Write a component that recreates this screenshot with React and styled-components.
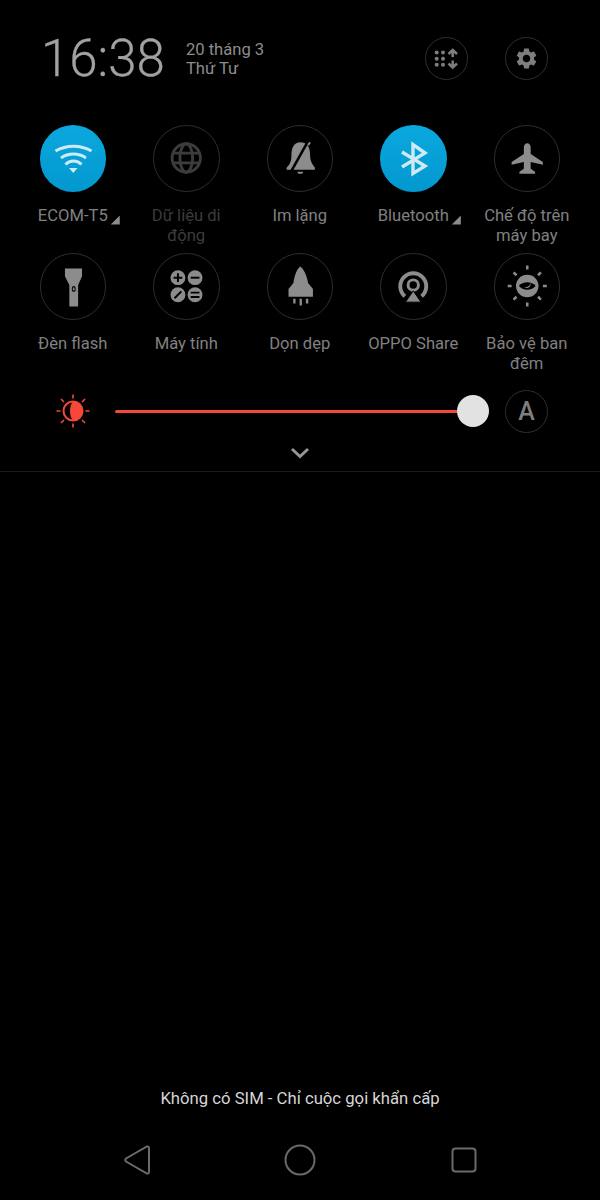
import styled, { createGlobalStyle } from "styled-components";
import { MdSettings } from "react-icons/md";

const GlobalStyle = createGlobalStyle`
  html, body {
    margin: 0;
    padding: 0;
    background: #000;
  }
  * {
    box-sizing: border-box;
  }
`;

const Screen = styled.div`
  width: 600px;
  height: 1200px;
  background: #000;
  display: flex;
  flex-direction: column;
  font-family: Roboto, "Noto Sans", sans-serif;
  overflow: hidden;
`;

const Header = styled.div`
  height: 125px;
  padding: 37px 52px 0 41px;
  display: flex;
  align-items: flex-start;
`;

const Clock = styled.div`
  font-size: 51px;
  font-weight: 300;
  line-height: 44px;
  color: #a2a2a2;
  -webkit-text-stroke: 0.3px #a2a2a2;
`;

const DateBox = styled.div`
  margin-left: 21px;
  margin-top: 3px;
  font-size: 16.6px;
  line-height: 19px;
  color: #8c8c8c;
  flex: 1;
`;

const RingButton = styled.div`
  width: 43px;
  height: 43px;
  margin-left: ${(props) => props.$gap || 0}px;
  border: 1px solid #303030;
  border-radius: 50%;
  display: flex;
  justify-content: center;
  align-items: center;
  color: #7e7e7e;
  font-size: 25px;
  font-weight: 500;
  flex-shrink: 0;
`;

const TileGrid = styled.div`
  padding-left: 16px;
  display: grid;
  grid-template-columns: repeat(5, 113.5px);
  grid-auto-rows: 128px;
`;

const Tile = styled.div`
  display: flex;
  flex-direction: column;
  align-items: center;
`;

const Circle = styled.div`
  width: 66.5px;
  height: 66.5px;
  border-radius: 50%;
  display: flex;
  justify-content: center;
  align-items: center;
  color: ${(props) => (props.$muted ? "#3c3c3c" : "#8c8c8c")};
  border: ${(props) => (props.$on ? "none" : "1px solid #2e2e2e")};
  background: ${(props) =>
    props.$on ? "linear-gradient(#0aa8de, #0298cf)" : "transparent"};
`;

const TileLabel = styled.div`
  width: 106px;
  margin-top: 14px;
  font-size: 16.6px;
  line-height: 20px;
  text-align: center;
  color: ${(props) => (props.$muted ? "#3c3c3c" : "#808080")};
`;

const Corner = styled.span`
  position: relative;
  &::after {
    content: "";
    position: absolute;
    left: calc(100% + 3px);
    bottom: 0;
    width: 9px;
    height: 9px;
    background: #8c8c8c;
    clip-path: polygon(100% 0, 100% 100%, 0 100%);
  }
`;

const BrightnessRow = styled.div`
  height: 44px;
  margin-top: 8px;
  padding-left: 56px;
  display: flex;
  align-items: center;
`;

const SunWrap = styled.div`
  width: 34px;
  height: 34px;
  margin-right: 25px;
`;

const Track = styled.div`
  position: relative;
  width: 374px;
  height: 32px;
  display: flex;
  align-items: center;
`;

const TrackFill = styled.div`
  width: 358px;
  height: 3px;
  background: #f5473a;
  border-radius: 2px;
`;

const Thumb = styled.div`
  position: absolute;
  right: 0;
  top: 0;
  width: 32px;
  height: 32px;
  border-radius: 50%;
  background: #e2e2e2;
`;

const ChevronRow = styled.div`
  height: 39px;
  padding-top: 14px;
  display: flex;
  justify-content: center;
  border-bottom: 1px solid #191919;
`;

const Spacer = styled.div`
  flex: 1;
`;

const SimNotice = styled.div`
  font-size: 16.7px;
  line-height: 20px;
  text-align: center;
  color: #d6d6d6;
`;

const NavBar = styled.div`
  height: 91px;
  padding: 11px 0 0 123px;
  display: flex;
  align-items: center;
`;

const NavSlot = styled.div`
  width: ${(props) => props.$w}px;
  display: flex;
`;

const WifiIcon = () => (
  <svg width="66" height="66" viewBox="0 0 66 66" fill="none" stroke="#cdeaf6" strokeWidth="3">
    <path d="M15.500 26 A36 36 0 0 1 51.500 26" />
    <path d="M21 33 A22 22 0 0 1 46 33" />
    <path d="M25.500 39.500 A11 11 0 0 1 41.500 39.500" />
    <path d="M29 43 L37.500 43 L33.300 48 Z" fill="#cdeaf6" stroke="none" />
  </svg>
);

const GlobeIcon = () => (
  <svg width="66" height="66" viewBox="0 0 66 66" fill="none" stroke="currentColor" strokeWidth="3">
    <circle cx="33" cy="33" r="14.5" />
    <ellipse cx="33" cy="33" rx="6.5" ry="14.5" />
    <path d="M19 28 H47 M19 38 H47" />
  </svg>
);

const BellOffIcon = () => (
  <svg width="66" height="66" viewBox="0 0 66 66">
    <path
      d="M33 17 C40 17 43 22 43 29 C43 36 45 39 48 43 V45 H19 V43 C23 39 24 36 24 30 C24 22 27 17 33 17 Z"
      fill="currentColor"
    />
    <path d="M42 14 L23 48" stroke="#000" strokeWidth="2.600" />
    <path d="M43 17 L41 20" stroke="currentColor" strokeWidth="2" />
    <path d="M30 47 H36 L35 49 H31 Z" fill="currentColor" />
  </svg>
);

const BluetoothIcon = () => (
  <svg width="66" height="66" viewBox="0 0 66 66" fill="none" stroke="#cdeaf6" strokeWidth="3.400">
    <path d="M22 27 L45 41 L33 48.500 V19.500 L45 28 L22 42" />
  </svg>
);

const PlaneIcon = () => (
  <svg width="66" height="66" viewBox="0 0 66 66">
    <path
      d="M33 18 C35 18 36.500 20 36.500 22 V29 L49 37 V40 L36.500 37 V44 L41 47 V49 H25 V47 L29.500 44 V37 L17 40 V37 L29.500 29 V22 C29.500 20 31 18 33 18 Z"
      fill="currentColor"
    />
  </svg>
);

const FlashIcon = () => (
  <svg width="66" height="66" viewBox="0 0 66 66">
    <path d="M24.500 15 H42 V23 L38 32 V54 H29 V32 L24.500 23 Z" fill="currentColor" />
    <ellipse cx="33.500" cy="36" rx="2" ry="3" fill="#000" />
    <ellipse cx="33.500" cy="36" rx="1" ry="1.800" fill="currentColor" />
  </svg>
);

const CalcIcon = () => (
  <svg width="66" height="66" viewBox="0 0 66 66">
    <circle cx="24.5" cy="24.5" r="7.6" fill="currentColor" />
    <circle cx="42" cy="24.5" r="7.6" fill="currentColor" />
    <circle cx="24.5" cy="42" r="7.6" fill="currentColor" />
    <circle cx="42" cy="42" r="7.6" fill="currentColor" />
    <g stroke="#000" strokeWidth="2" fill="none">
      <path d="M20 24.5 H29 M24.5 20 V29" />
      <path d="M37.5 24.5 H46.5" />
      <path d="M21 45.5 L28 38.5" />
      <path d="M37.5 39.8 H46.5 M37.5 44.2 H46.5" />
    </g>
  </svg>
);

const RocketIcon = () => (
  <svg width="66" height="66" viewBox="0 0 66 66">
    <path
      d="M33 13 C36 15 40 22 41 30 L46 36 V44 H21 V36 L26 30 C27 22 30 15 33 13 Z"
      fill="currentColor"
    />
    <path d="M27 46 V51 M33.500 46 V53 M40 46 V51" stroke="currentColor" strokeWidth="2.400" />
  </svg>
);

const ShareIcon = () => (
  <svg width="66" height="66" viewBox="0 0 66 66" fill="none" stroke="currentColor">
    <path d="M24.500 43.500 A13.300 13.300 0 1 1 41.500 43.500" strokeWidth="4" />
    <circle cx="33" cy="32" r="5.300" strokeWidth="3" />
    <path d="M25 49.500 L33 38 L41 49.500 Z" fill="currentColor" stroke="#000" strokeWidth="1" />
  </svg>
);

const EyeSunIcon = () => (
  <svg width="66" height="66" viewBox="0 0 66 66">
    <circle cx="33" cy="33" r="11.500" fill="currentColor" />
    <path
      d="M33 12 V16 M33 50 V54 M13 33 H17 M49 33 H53 M19 19 L22 22 M44 44 L47 47 M19 47 L22 44 M44 22 L47 19"
      stroke="currentColor"
      strokeWidth="2.600"
    />
    <path d="M24.500 33 C28 28 38 28 41.500 33 C38 38 28 38 24.500 33 Z" fill="#000" />
    <path d="M29.500 34 C33 35 36 33 36 30 C37.500 33 34 37 29.500 34 Z" fill="currentColor" />
  </svg>
);

const ArrangeIcon = () => (
  <svg width="32" height="24" viewBox="0 0 32 24">
    {[5.500, 11.800, 17.800].map((y) =>
      [5.700, 12].map((x) => <circle key={`${x}-${y}`} cx={x} cy={y} r="2" fill="#7e7e7e" />)
    )}
    <path
      d="M17.500 7 L21.700 3 L26 7 M21.700 3.500 V10 M17.500 16.500 L21.700 20.500 L26 16.500 M21.700 13.500 V20"
      fill="none"
      stroke="#7e7e7e"
      strokeWidth="2.500"
    />
  </svg>
);

const SunIcon = () => (
  <svg width="34" height="34" viewBox="0 0 34 34">
    <circle cx="17" cy="17" r="9.500" fill="none" stroke="#f5473a" strokeWidth="2" />
    <path d="M17 7.500 A9.500 9.500 0 0 1 17 26.500 C13 23 13 11 17 7.500 Z" fill="#f5473a" />
    <path
      d="M17 0.500 V4.500 M17 29.500 V33.500 M0.500 17 H4.500 M29.500 17 H33.500 M5 5 L8 8 M26 26 L29 29 M5 29 L8 26 M26 8 L29 5"
      stroke="#f5473a"
      strokeWidth="1.600"
    />
  </svg>
);

const ChevronIcon = () => (
  <svg width="20" height="12" viewBox="0 0 20 12" fill="none" stroke="#959595" strokeWidth="3">
    <path d="M2 2 L10 9.500 L18 2" />
  </svg>
);

const navStroke = { fill: "none", stroke: "#6a6a6a", strokeWidth: 2 };

const tiles = [
  { label: "ECOM-T5", icon: <WifiIcon />, on: true, corner: true },
  { label: "Dữ liệu di động", icon: <GlobeIcon />, muted: true },
  { label: "Im lặng", icon: <BellOffIcon /> },
  { label: "Bluetooth", icon: <BluetoothIcon />, on: true, corner: true },
  { label: "Chế độ trên máy bay", icon: <PlaneIcon /> },
  { label: "Đèn flash", icon: <FlashIcon /> },
  { label: "Máy tính", icon: <CalcIcon /> },
  { label: "Dọn dẹp", icon: <RocketIcon /> },
  { label: "OPPO Share", icon: <ShareIcon /> },
  { label: "Bảo vệ ban đêm", icon: <EyeSunIcon /> },
];

const App = () => {
  return (
    <Screen>
      <GlobalStyle />
      <Header>
        <Clock>16:38</Clock>
        <DateBox>
          20 tháng 3
          <br />
          Thứ Tư
        </DateBox>
        <RingButton>
          <ArrangeIcon />
        </RingButton>
        <RingButton $gap={37}>
          <MdSettings />
        </RingButton>
      </Header>

      <TileGrid>
        {tiles.map((tile) => (
          <Tile key={tile.label}>
            <Circle $on={tile.on} $muted={tile.muted}>
              {tile.icon}
            </Circle>
            <TileLabel $muted={tile.muted}>
              {tile.corner ? <Corner>{tile.label}</Corner> : tile.label}
            </TileLabel>
          </Tile>
        ))}
      </TileGrid>

      <BrightnessRow>
        <SunWrap>
          <SunIcon />
        </SunWrap>
        <Track>
          <TrackFill />
          <Thumb />
        </Track>
        <RingButton $gap={16}>A</RingButton>
      </BrightnessRow>

      <ChevronRow>
        <ChevronIcon />
      </ChevronRow>

      <Spacer />
      <SimNotice>Không có SIM - Chỉ cuộc gọi khẩn cấp</SimNotice>

      <NavBar>
        <NavSlot $w={161}>
          <svg width="28" height="32" viewBox="0 0 28 32" {...navStroke}>
            <path d="M24 2.500 Q26 2 26 4.500 V27.500 Q26 30 24 29.500 L3 17.500 Q1.500 16 3 14.500 Z" />
          </svg>
        </NavSlot>
        <NavSlot $w={167}>
          <svg width="32" height="32" viewBox="0 0 32 32" {...navStroke}>
            <circle cx="16" cy="16" r="14.500" />
          </svg>
        </NavSlot>
        <NavSlot $w={26}>
          <svg width="26" height="26" viewBox="0 0 26 26" {...navStroke}>
            <rect x="1.500" y="1.500" width="23" height="23" rx="3" />
          </svg>
        </NavSlot>
      </NavBar>
    </Screen>
  );
};

export default App;
